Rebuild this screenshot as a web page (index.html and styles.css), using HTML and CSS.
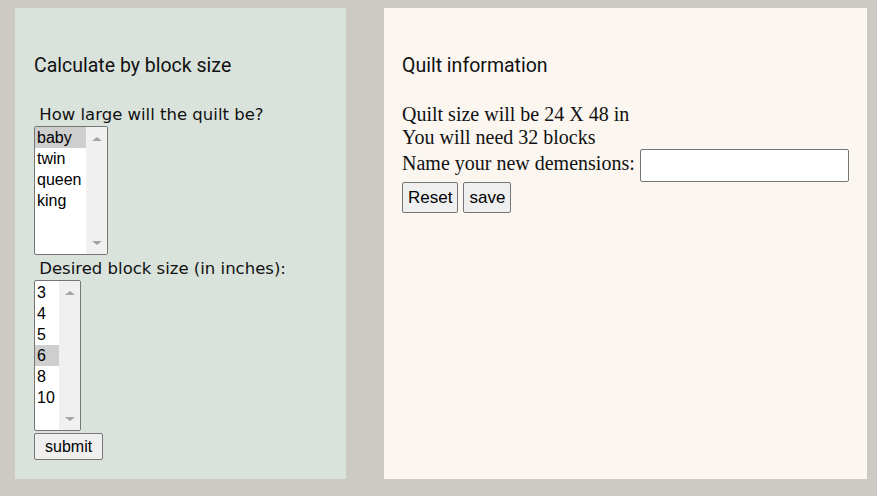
FILE: index.html
```html
<!DOCTYPE html>
<html>
<head>
<meta charset="utf-8">
<link rel="stylesheet" href="styles.css">
</head>
<body>
<div class="layout">
  <section class="panel calc">
    <h2 class="title">Calculate by block size</h2>
    <form class="calc-form">
      <label class="field-label"> How large will the quilt be?</label>
      <div class="list list-size" role="listbox">
        <div class="opts">
          <div class="opt selected" role="option">baby</div>
          <div class="opt" role="option">twin</div>
          <div class="opt" role="option">queen</div>
          <div class="opt" role="option">king</div>
        </div>
        <div class="track"><span class="arrow up"></span><span class="arrow down"></span></div>
      </div>
      <label class="field-label"> Desired block size (in inches):</label>
      <div class="list list-block" role="listbox">
        <div class="opts">
          <div class="opt" role="option">3</div>
          <div class="opt" role="option">4</div>
          <div class="opt" role="option">5</div>
          <div class="opt selected" role="option">6</div>
          <div class="opt" role="option">8</div>
          <div class="opt" role="option">10</div>
        </div>
        <div class="track"><span class="arrow up"></span><span class="arrow down"></span></div>
      </div>
      <button type="button" class="btn btn-submit">submit</button>
    </form>
  </section>
  <section class="panel info">
    <h2 class="title info-title">Quilt information</h2>
    <div class="info-body">
      <div class="line">Quilt size will be 24 X 48 in</div>
      <div class="line">You will need 32 blocks</div>
      <div class="line line-name"><span class="name-label">Name your new demensions:</span><input type="text" class="name-input"></div>
      <div class="actions">
        <button type="button" class="btn">Reset</button>
        <button type="button" class="btn">save</button>
      </div>
    </div>
  </section>
</div>
</body>
</html>
```

FILE: styles.css
```css
html, body {
  margin: 0;
  padding: 0;
}
body {
  background: #cdcac3;
  padding: 8px 10px 17px 15px;
  height: 496px;
  box-sizing: border-box;
}
.layout {
  display: flex;
  gap: 38px;
  height: 471px;
}
.panel {
  box-sizing: border-box;
  padding: 0 19px;
}
.calc {
  width: 331px;
  flex-shrink: 0;
  background: #d9e3dc;
}
.info {
  flex: 1;
  min-width: 0;
  background: #fbf6f0;
  padding: 0 18px;
}
.title {
  font-family: Roboto, sans-serif;
  font-weight: 400;
  font-size: 19.5px;
  color: #111;
  margin: 46px 0 27px 0;
  line-height: 24px;
}
.info-title {
  margin-bottom: 25px;
}
.calc-form {
  display: flex;
  flex-direction: column;
  align-items: flex-start;
}
.field-label {
  font-family: "DejaVu Sans", Verdana, sans-serif;
  font-size: 16.5px;
  line-height: 20px;
  color: #111;
  white-space: pre;
  margin-bottom: 1px;
}
.list {
  display: flex;
  box-sizing: border-box;
  font-family: "Liberation Sans", Arial, sans-serif;
  font-size: 16px;
  color: #000;
  border: 1px solid #767676;
  border-radius: 2px;
  background: #fff;
  margin-bottom: 4px;
  overflow: hidden;
}
.opts {
  flex: 1;
  padding-top: 0;
}
.opt {
  line-height: 21px;
  height: 21px;
  padding-left: 2px;
  white-space: nowrap;
}
.opt.selected {
  background: #cecece;
}
.track {
  width: 21px;
  background: #f0f0f0;
  display: flex;
  flex-direction: column;
  justify-content: space-between;
  align-items: center;
  padding: 10px 0 9px;
}
.arrow {
  width: 0;
  height: 0;
  border-left: 5px solid transparent;
  border-right: 5px solid transparent;
}
.arrow.up {
  border-bottom: 4px solid #a3a3a3;
}
.arrow.down {
  border-top: 4px solid #a3a3a3;
}
.list-size {
  width: 74px;
  height: 129px;
}
.list-block {
  width: 47px;
  height: 151px;
  margin-top: 0;
  margin-bottom: 2px;
}
.list-block .opts {
  padding-top: 1px;
}
.btn {
  font-family: "Liberation Sans", Arial, sans-serif;
  font-size: 16px;
  color: #000;
  background: #efefef;
  border: 1px solid #767676;
  border-radius: 2px;
  padding: 0 10px;
  height: 27px;
  margin: 0;
}
.info-body {
  font-family: "Liberation Serif", "Times New Roman", serif;
  font-size: 20px;
  color: #111;
}
.line {
  line-height: 23px;
}
.line-name {
  display: flex;
  align-items: baseline;
  gap: 5px;
}
.name-label {
  white-space: nowrap;
  flex-shrink: 0;
}
.name-input {
  flex-shrink: 0;
  width: 209px;
  height: 33px;
  box-sizing: border-box;
  border: 1px solid #767676;
  border-radius: 2px;
  background: #fff;
  margin: 0;
  padding: 0 2px;
}
.actions {
  display: flex;
  gap: 5px;
  margin-top: 0;
}
.actions .btn {
  height: 31px;
  font-size: 17px;
  padding: 0 5px;
}
```
